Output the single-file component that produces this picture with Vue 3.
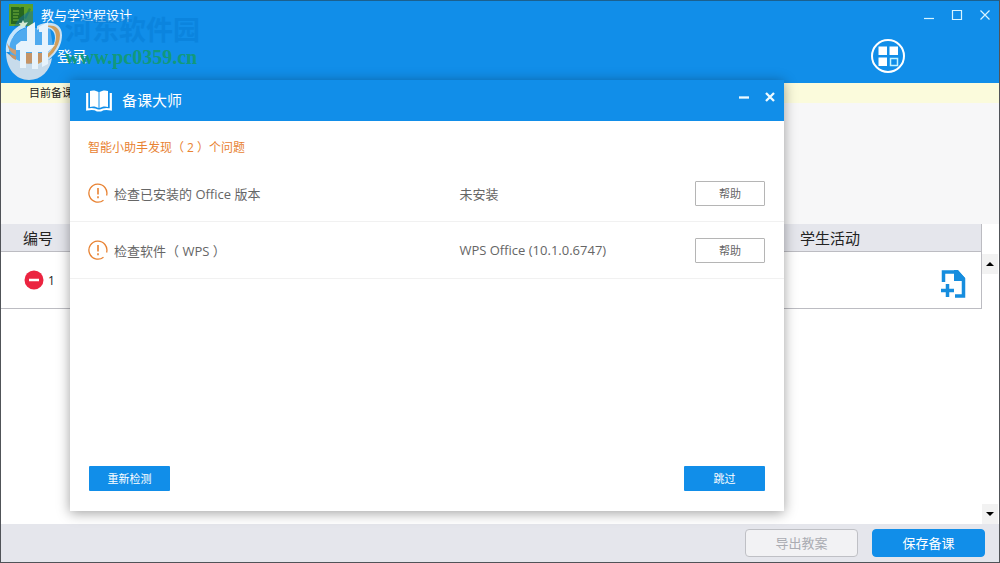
<script setup>
import { ref } from 'vue'

const checks = ref([
  { name: '检查已安装的 Office 版本', result: '未安装' },
  { name: '检查软件（ WPS ）', result: 'WPS Office (10.1.0.6747)' },
])
</script>

<template>
  <div class="window">
    <header class="header">
      <div class="titlebar">
        <svg class="app-icon" viewBox="0 0 24 22" aria-hidden="true">
          <rect width="24" height="22" fill="#5b9f2b" />
          <path d="M2 3h8l1 1 1-1h3v17H2z" fill="#26661f" />
          <path d="M4 7h6M4 10h6M4 13h5M4 16h6" stroke="#79b43c" />
          <path d="M15 14l5-10 2 1-5 10z" fill="#318743" />
        </svg>
        <h1 class="title">教与学过程设计</h1>
        <div class="controls">
          <button class="control" aria-label="最小化">
            <svg viewBox="0 0 12 12"><path d="M1 9.500h10" /></svg>
          </button>
          <button class="control" aria-label="最大化">
            <svg viewBox="0 0 12 12"><path d="M1.500 1.500h9v9h-9z" /></svg>
          </button>
          <button class="control" aria-label="关闭">
            <svg viewBox="0 0 12 12"><path d="M1.500 1.500l9 9m0-9l-9 9" /></svg>
          </button>
        </div>
      </div>
      <div class="toolbar">
        <a class="login" href="#">登录</a>
        <button class="apps" aria-label="应用">
          <svg viewBox="0 0 34 34">
            <circle cx="17" cy="17" r="16" fill="none" stroke="#fff" stroke-width="2" />
            <path d="M7.500 7.500h8.500v8.500H7.500zM18.500 7.500H27v8.500h-8.500zM7.500 18.500h8.500V27H7.500z" fill="#fff" />
            <path d="M19.500 19.500h7v7h-7z" fill="none" stroke="#c4f4ff" stroke-width="1.500" />
          </svg>
        </button>
      </div>
      <div class="watermark" aria-hidden="true">
        <svg class="mark" viewBox="1 9 64 72">
          <path d="M14 27C18 17 26 12 33 11v13l-9 3z" fill="#146fae" opacity=".5" />
          <path d="M6 52C5 37 14 26 28 22l-4 6C13 32 10 41 12 52z" fill="#d9efff" />
          <path d="M9 51C9 39 16 31 26 28h24l4 24-8 10H14z" fill="#55aef0" />
          <path d="M6 52c0 17 10 28 23 28 12 0 21-9 23-22-15 9-32 7-46-6z" fill="#dbe4ec" />
          <path d="M37 26c11-6 25-4 25 9 0 14-11 26-25 31l-3-3c12-6 21-16 21-25 0-10-9-12-18-8z" fill="#dcebf6" />
          <path d="M45 26c8-2 15 1 15 9 0 13-10 24-24 30v-3c12-6 20-15 20-25 0-7-4-10-11-11z" fill="#e7a04c" />
          <path d="M7 43c2 4 5 6 9 7v5c-5-2-8-6-9-12z" fill="#e2a066" />
          <path d="M9 54c2 3 4 5 7 6v-4zM20 53v9c5 2 9 2 13 1V53zM38 53v9l4-1v-8z" fill="#d99559" />
          <path d="M16 45l5-4h6V27l8-5v23h7V32h-3v-5l9-5v23h7l-7 7v12l-6 3V52h-4v17h-6V52h-6v16h-6V50h-4z" fill="#fff" />
          <path d="M23 20l1.300 2.700 3 .400-2.200 2.100.600 3-2.700-1.400-2.700 1.400.600-3-2.200-2.100 3-.400z" fill="#e6f6e6" />
        </svg>
        <div class="mark-text">
          <span class="mark-name">河东软件园</span>
          <span class="mark-url">www.pc0359.cn</span>
        </div>
      </div>
    </header>

    <div class="notice">目前备课</div>
    <div class="blank"></div>

    <main class="content">
      <table class="lessons">
        <colgroup>
          <col class="col-no" />
          <col />
          <col class="col-activity" />
        </colgroup>
        <thead>
          <tr>
            <th>编号</th>
            <th></th>
            <th>学生活动</th>
          </tr>
        </thead>
        <tbody>
          <tr>
            <td>
              <div class="number">
                <button class="remove" aria-label="删除">
                  <svg viewBox="0 0 20 20"><circle cx="10" cy="10" r="9.500" fill="#eb2440" /><path d="M5 10h10" stroke="#fff" stroke-width="2.500" /></svg>
                </button>
                <span>1</span>
              </div>
            </td>
            <td></td>
            <td>
              <button class="add" aria-label="添加活动">
                <svg viewBox="0 0 26 28">
                  <path d="M3.500 12V2H17l6.500 7v17H15" fill="none" stroke="#168dde" stroke-width="3.500" />
                  <path d="M14 0h4l7 8v3H14z" fill="#168dde" />
                  <path d="M7.500 14v13M1 20.500h13" stroke="#168dde" stroke-width="3.500" />
                </svg>
              </button>
            </td>
          </tr>
        </tbody>
      </table>
      <div class="scroll">
        <button class="arrow" aria-label="向上滚动"><svg viewBox="0 0 8 4"><path d="M0 4l4-4 4 4z" /></svg></button>
        <button class="arrow" aria-label="向下滚动"><svg viewBox="0 0 8 4"><path d="M0 0l4 4 4-4z" /></svg></button>
      </div>
    </main>

    <footer class="footer">
      <button class="action" disabled>导出教案</button>
      <button class="action primary">保存备课</button>
    </footer>

    <section class="dialog" role="dialog" aria-labelledby="dialog-title">
      <div class="dialog-head">
        <svg class="book" viewBox="0 0 26 22" aria-hidden="true">
          <path d="M4 1c3-1 6-.500 8.500 1v16C10 16.500 7 16 4 17z" fill="#fff" />
          <path d="M22 1c-3-1-6-.500-8.500 1v16c2.500-1.500 5.500-2 8.500-1z" fill="#fff" />
          <path d="M1.200 3v16.500c5-1 8-.500 10.300 1h3c2.500-1.500 5.500-2 10.300-1V3" fill="none" stroke="#fff" stroke-width="2.200" />
        </svg>
        <h2 id="dialog-title" class="dialog-title">备课大师</h2>
        <button class="dialog-control" aria-label="最小化"><svg viewBox="0 0 12 12"><path d="M1 6.500h10" /></svg></button>
        <button class="dialog-control" aria-label="关闭"><svg viewBox="0 0 12 12"><path d="M2 2l8 8m0-8l-8 8" /></svg></button>
      </div>
      <p class="summary">智能小助手发现（ {{ checks.length }} ）个问题</p>
      <ul class="checks">
        <li v-for="check in checks" :key="check.name" class="check">
          <svg class="warning" viewBox="0 0 20 20" aria-hidden="true">
            <path d="M15.500 17.200A9 9 0 1 1 18.600 12.500" fill="none" stroke="#e88232" stroke-width="1.300" />
            <path d="M10 5v6.500M10 13.200v2" stroke="#e88232" stroke-width="1.600" />
          </svg>
          <span class="check-name">{{ check.name }}</span>
          <span class="check-result">{{ check.result }}</span>
          <button class="help">帮助</button>
        </li>
      </ul>
      <div class="dialog-actions">
        <button class="dialog-button">重新检测</button>
        <button class="dialog-button">跳过</button>
      </div>
    </section>
  </div>
</template>

<style>
body {
  margin: 0;
}
</style>

<style scoped>
.window {
  position: relative;
  display: flex;
  flex-direction: column;
  box-sizing: border-box;
  min-height: 100vh;
  border: 1px solid #505358;
  border-top-color: #1b608f;
  background: #fff;
  color: #222;
  font-family: "Open Sans", "Noto Sans CJK SC", sans-serif;
}
button {
  padding: 0;
  border: 0;
  background: none;
  font: inherit;
  color: inherit;
}
svg {
  display: block;
}
.header {
  position: relative;
  height: 82px;
  background: #118ee9;
  color: #fff;
}
.titlebar {
  display: flex;
  align-items: center;
  height: 28px;
  padding: 0 8px;
}
.app-icon {
  width: 24px;
  height: 22px;
}
.title {
  margin: 0 auto 0 8px;
  font-size: 13px;
  font-weight: 400;
  line-height: 20px;
}
.controls {
  display: flex;
  gap: 16px;
}
.control svg {
  width: 12px;
  height: 12px;
  fill: none;
  stroke: #d8f4ff;
  stroke-width: 1.2;
}
.toolbar {
  display: flex;
  align-items: center;
  justify-content: space-between;
  height: 54px;
  padding: 0 94px 0 56px;
}
.login {
  color: #fff;
  font-size: 15px;
  line-height: 20px;
  text-decoration: none;
}
.apps svg {
  width: 34px;
  height: 34px;
}
.watermark {
  position: absolute;
  top: 8px;
  left: 0;
  display: flex;
  pointer-events: none;
}
.mark {
  width: 64px;
  height: 72px;
  opacity: 0.9;
}
.mark-text {
  display: flex;
  flex-direction: column;
  padding-top: 6px;
}
.mark-name {
  font-size: 27px;
  font-weight: 700;
  line-height: 30px;
  color: #087fd8;
  opacity: 0.6;
}
.mark-url {
  font-family: "Liberation Serif", serif;
  font-size: 20px;
  font-weight: 700;
  line-height: 24px;
  color: #12997c;
}
.notice {
  height: 20px;
  padding-left: 28px;
  background: #fbfbdc;
  font-size: 11px;
  line-height: 20px;
}
.blank {
  height: 121px;
  background: #f7f7f8;
}
.content {
  display: flex;
  flex: 1;
  align-items: flex-start;
}
.lessons {
  flex: 1;
  border-collapse: separate;
  border-spacing: 0;
  border-right: 1px solid #bcbcc2;
  table-layout: fixed;
  width: 100%;
}
.col-no {
  width: 74px;
}
.col-activity {
  width: 302px;
}
.lessons th {
  height: 28px;
  box-sizing: border-box;
  padding: 0;
  border-bottom: 1px solid #bcbcc2;
  background: #e5e6ec;
  font-size: 15px;
  font-weight: 400;
  line-height: 24px;
}
.lessons td {
  height: 57px;
  box-sizing: border-box;
  padding: 0;
  border-bottom: 1px solid #bcbcc2;
}
.number {
  display: flex;
  align-items: center;
  gap: 4px;
  padding-left: 23px;
  font-size: 12px;
}
.remove svg {
  width: 20px;
  height: 20px;
}
.add {
  display: block;
  margin: 8px 15px 0 auto;
}
.add svg {
  width: 26px;
  height: 28px;
}
.scroll {
  display: flex;
  flex-direction: column;
  justify-content: space-between;
  align-self: stretch;
  width: 17px;
  padding-top: 30px;
}
.arrow {
  display: grid;
  place-items: center;
  width: 16px;
  height: 20px;
  background: #f2f2f2;
}
.arrow svg {
  width: 8px;
  height: 4px;
}
.footer {
  display: flex;
  align-items: center;
  justify-content: flex-end;
  gap: 14px;
  height: 38px;
  padding-right: 14px;
  background: #e5e6ec;
}
.action {
  width: 113px;
  height: 28px;
  border: 1px solid #bfc0c5;
  border-radius: 4px;
  background: #f2f2f4;
  color: #aaacb2;
  font-size: 13px;
  line-height: 24px;
}
.action.primary {
  border-color: #118ee9;
  background: #118ee9;
  color: #fff;
}
.dialog {
  position: absolute;
  top: 79px;
  bottom: 51px;
  left: 69px;
  right: 215px;
  display: flex;
  flex-direction: column;
  background: #fff;
  box-shadow: 0 2px 12px rgba(0, 0, 0, 0.38);
}
.dialog-head {
  display: flex;
  align-items: center;
  gap: 14px;
  height: 41px;
  padding: 0 8px 0 16px;
  background: #118ee9;
  color: #fff;
}
.book {
  width: 26px;
  height: 22px;
}
.dialog-title {
  margin: 0 auto 2px -4px;
  font-size: 15px;
  font-weight: 400;
}
.dialog-control svg {
  width: 12px;
  height: 12px;
  margin-bottom: 8px;
  fill: none;
  stroke: #eefaff;
  stroke-width: 2.3;
}
.summary {
  margin: 17px 18px 7px;
  color: #e88232;
  font-size: 12px;
  line-height: 20px;
}
.checks {
  margin: 0;
  padding: 0;
  list-style: none;
}
.check {
  display: flex;
  align-items: center;
  height: 56px;
  padding: 0 19px 0 18px;
  border-bottom: 1px solid #f1f1f1;
  color: #666;
  font-size: 13px;
}
.warning {
  width: 20px;
  height: 20px;
  margin-right: 6px;
}
.check-name {
  flex: 346;
}
.check-result {
  flex: 236;
}
.help {
  width: 70px;
  height: 25px;
  border: 1px solid #b5b5b5;
  border-radius: 1px;
  background: #fff;
  font-size: 11px;
}
.dialog-actions {
  display: flex;
  justify-content: space-between;
  margin-top: auto;
  padding: 0 19px 20px;
}
.dialog-button {
  width: 81px;
  height: 25px;
  border-radius: 1px;
  background: #118ee9;
  color: #fff;
  font-size: 11px;
  line-height: 24px;
}
</style>
